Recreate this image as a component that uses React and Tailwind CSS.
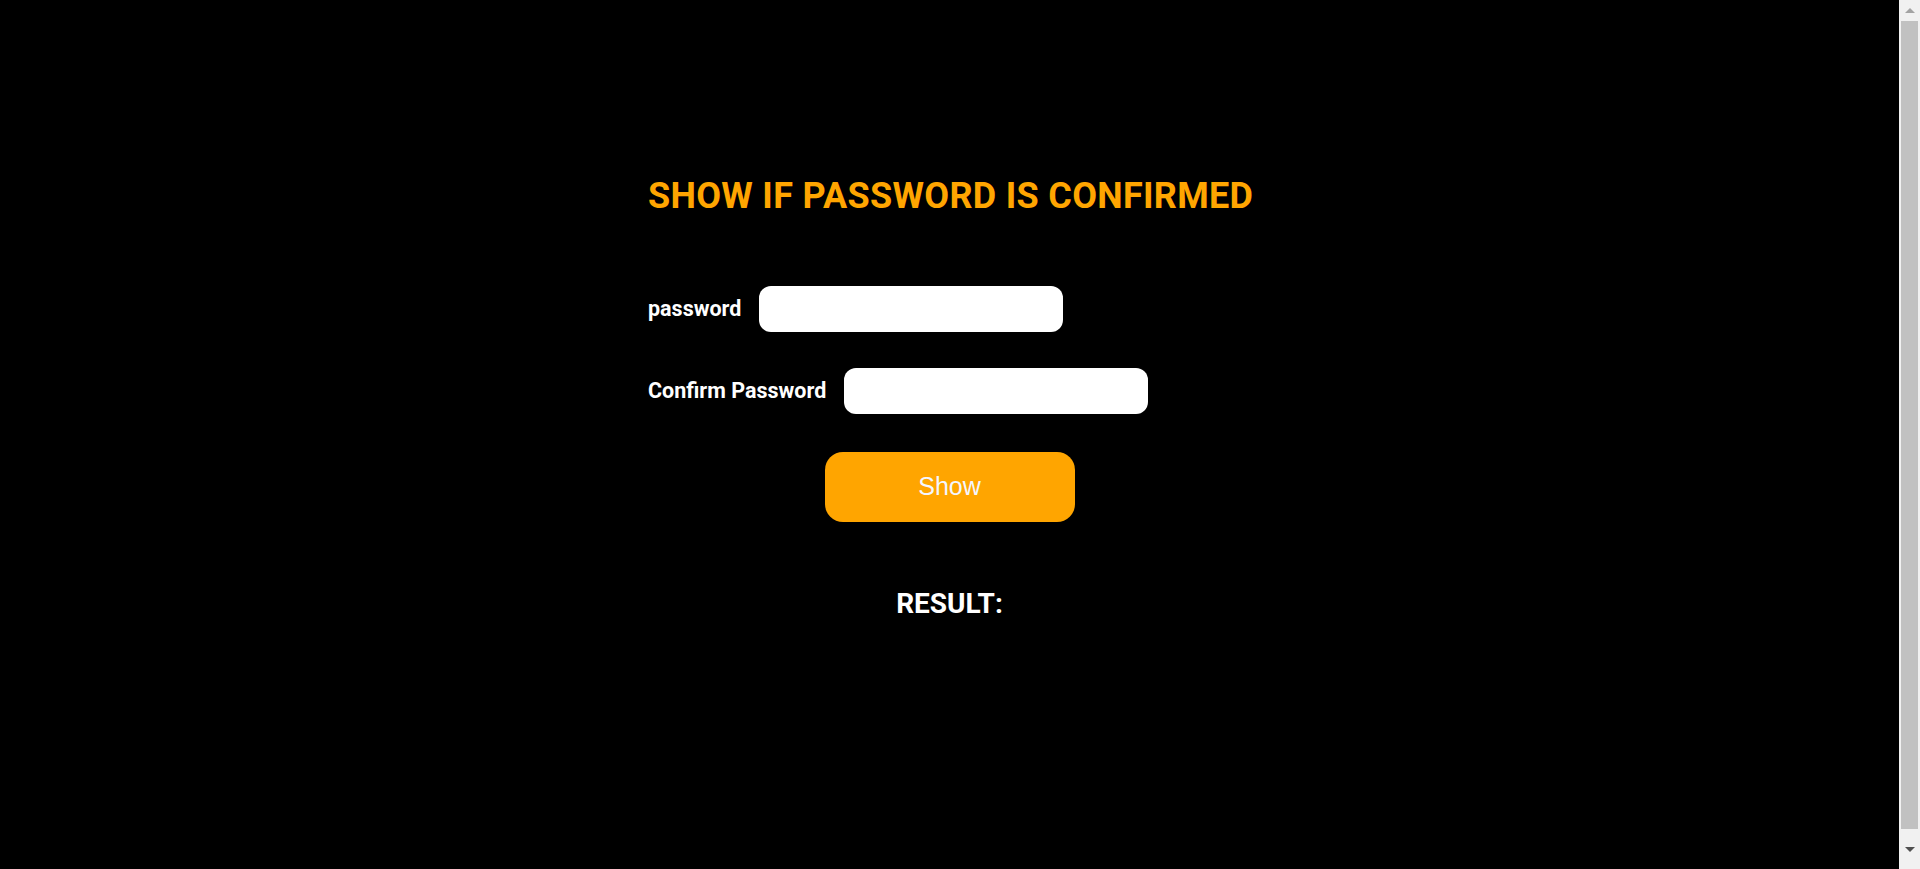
export default function App() {
  return (
    <div className="flex h-[869px] w-full overflow-hidden bg-black">
      <main className="flex-1">
        <div className="w-[603px] mx-auto pt-[176px] flex flex-col">
          {/* Title */}
          <h1 className="text-[36px] leading-[40px] font-bold text-[#ffa500] tracking-[0.3px] font-['Roboto',sans-serif] whitespace-nowrap">
            SHOW IF PASSWORD IS CONFIRMED
          </h1>

          {/* Fields */}
          <div className="mt-[70px] flex items-center">
            <label className="text-white text-[21.5px] font-bold font-['Roboto',sans-serif]">password</label>
            <input type="password" className="ml-[18px] w-[304px] h-[46px] rounded-xl bg-white outline-none" />
          </div>
          <div className="mt-[36px] flex items-center">
            <label className="text-white text-[21.5px] font-bold font-['Roboto',sans-serif]">Confirm Password</label>
            <input type="password" className="ml-[18px] w-[304px] h-[46px] rounded-xl bg-white outline-none" />
          </div>

          {/* Button */}
          <button className="self-center mt-[38px] w-[250px] h-[70px] rounded-[18px] bg-[#ffa500] text-[#f4f6ff] text-[25px] font-['Liberation_Sans',sans-serif]">
            Show
          </button>

          {/* Result */}
          <h2 className="self-center mt-[61px] text-white text-[28px] font-bold font-['Roboto',sans-serif]">
            RESULT:
          </h2>
        </div>
      </main>

      {/* Scrollbar */}
      <div className="w-[21px] h-full bg-[#f1f1f1] flex flex-col">
        <div className="h-[21px] flex items-center justify-center">
          <div className="w-0 h-0 border-l-[5px] border-r-[5px] border-b-[5px] border-l-transparent border-r-transparent border-b-[#a3a3a3]" />
        </div>
        <div className="mx-[2px] h-[808px] bg-[#c1c1c1]" />
        <div className="flex-1 flex items-center justify-center">
          <div className="w-0 h-0 border-l-[5px] border-r-[5px] border-t-[5px] border-l-transparent border-r-transparent border-t-[#505050]" />
        </div>
      </div>
    </div>
  );
}
